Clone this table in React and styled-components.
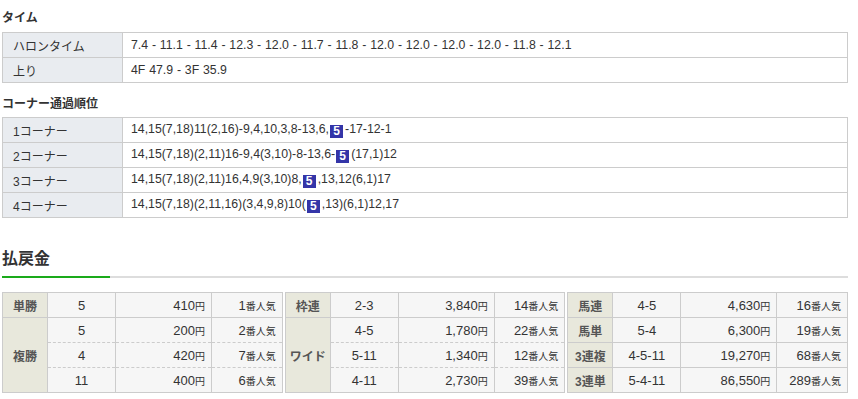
import React from 'react';
import styled, { createGlobalStyle } from 'styled-components';

const GlobalStyle = createGlobalStyle`
  body {
    margin: 0;
    background: #fff;
    color: #333;
    font-family: "Liberation Sans", "Noto Sans CJK JP", sans-serif;
    font-size: 12px;
  }
`;

const Page = styled.div`
  width: 846px;
  padding: 10px 2px 0;
`;

const SubTitle = styled.h3`
  margin: ${props => props.top || 0}px 0 ${props => props.bottom || 6}px;
  font-size: 12px;
  line-height: 16px;
  font-weight: bold;
  color: #333;
`;

const InfoTable = styled.table`
  width: 100%;
  border-collapse: collapse;
  table-layout: fixed;
  border: 1px solid #ccc;
`;

const InfoLabel = styled.th`
  width: 109px;
  height: 24px;
  padding: 0 0 0 10px;
  background: #e9ecf0;
  border: 1px solid #ccc;
  text-align: left;
  font-weight: normal;
  color: #333;
`;

const InfoValue = styled.td`
  height: 24px;
  padding: 0 0 0 8px;
  background: #fff;
  border: 1px solid #ccc;
  white-space: nowrap;
  font-size: 12.3px;
  word-spacing: ${props => props.spaced ? 0.4 : 0}px;
`;

const Horse = styled.span`
  display: inline-block;
  width: 13px;
  height: 13px;
  line-height: 13px;
  margin: 0 2px 0 1px;
  background: #3435a8;
  color: #fff;
  font-weight: bold;
  font-size: 12px;
  text-align: center;
  vertical-align: -2px;
`;

const PayTitle = styled.h2`
  margin: 31px 0 0;
  font-size: 16px;
  line-height: 20px;
  font-weight: bold;
  color: #333;
`;

const Rule = styled.div`
  display: flex;
  height: 2px;
  margin-top: 7px;
  background: #ddd;
`;

const RuleAccent = styled.div`
  width: 108px;
  background: #1aaa1a;
`;

const PayRow = styled.div`
  display: flex;
  gap: 2px;
  margin-top: 14px;
`;

const PayTable = styled.table`
  flex: 1;
  min-width: 0;
  border-collapse: collapse;
  table-layout: fixed;
  border: 1px solid #ccc;
`;

const PayKind = styled.th`
  width: 44px;
  height: 24px;
  padding: 0;
  background: #e8e8dc;
  border: 1px solid #ccc;
  color: #555;
  font-weight: bold;
  font-size: 12px;
  text-align: center;
  white-space: nowrap;
`;

const PayCell = styled.td`
  height: 24px;
  padding: 0 ${props => (props.align === 'right' ? 6 : 0)}px 0 0;
  background: #f6f6f6;
  border: 1px solid #ccc;
  ${props => props.dashTop && 'border-top: 1px dashed #ccc;'}
  ${props => props.dashBottom && 'border-bottom: 1px dashed #ccc;'}
  text-align: ${props => props.align || 'center'};
  color: #333;
  white-space: nowrap;
  font-size: 13px;
`;

const Unit = styled.span`
  font-size: 10px;
`;

const times = [
  ['ハロンタイム', '7.4 - 11.1 - 11.4 - 12.3 - 12.0 - 11.7 - 11.8 - 12.0 - 12.0 - 12.0 - 12.0 - 11.8 - 12.1'],
  ['上り', '4F 47.9 - 3F 35.9'],
];

const corners = [
  ['1コーナー', '14,15(7,18)11(2,16)-9,4,10,3,8-13,6,', '-17-12-1'],
  ['2コーナー', '14,15(7,18)(2,11)16-9,4(3,10)-8-13,6-', '(17,1)12'],
  ['3コーナー', '14,15(7,18)(2,11)16,4,9(3,10)8,', ',13,12(6,1)17'],
  ['4コーナー', '14,15(7,18)(2,11,16)(3,4,9,8)10(', ',13)(6,1)12,17'],
];

const payouts = [
  [
    { kind: '単勝', rows: [['5', '410', '1']] },
    { kind: '複勝', rows: [['5', '200', '2'], ['4', '420', '7'], ['11', '400', '6']] },
  ],
  [
    { kind: '枠連', rows: [['2-3', '3,840', '14']] },
    { kind: 'ワイド', rows: [['4-5', '1,780', '22'], ['5-11', '1,340', '12'], ['4-11', '2,730', '39']] },
  ],
  [
    { kind: '馬連', rows: [['4-5', '4,630', '16']] },
    { kind: '馬単', rows: [['5-4', '6,300', '19']] },
    { kind: '3連複', rows: [['4-5-11', '19,270', '68']] },
    { kind: '3連単', rows: [['5-4-11', '86,550', '289']] },
  ],
];

function PayBlock({ groups }) {
  return (
    <PayTable>
      <colgroup>
        <col style={{ width: 45 }} />
        <col style={{ width: 68 }} />
        <col style={{ width: 96 }} />
        <col />
      </colgroup>
      <tbody>
        {groups.map(g =>
          g.rows.map((r, i) => {
            const dashTop = i > 0;
            const dashBottom = i < g.rows.length - 1;
            return (
              <tr key={g.kind + i}>
                {i === 0 && <PayKind rowSpan={g.rows.length}>{g.kind}</PayKind>}
                <PayCell dashTop={dashTop} dashBottom={dashBottom}>{r[0]}</PayCell>
                <PayCell align="right" dashTop={dashTop} dashBottom={dashBottom}>
                  {r[1]}<Unit>円</Unit>
                </PayCell>
                <PayCell align="right" dashTop={dashTop} dashBottom={dashBottom}>
                  {r[2]}<Unit>番人気</Unit>
                </PayCell>
              </tr>
            );
          })
        )}
      </tbody>
    </PayTable>
  );
}

export default function App() {
  return (
    <Page>
      <GlobalStyle />
      <SubTitle>タイム</SubTitle>
      <InfoTable>
        <tbody>
          {times.map(([label, value]) => (
            <tr key={label}>
              <InfoLabel>{label}</InfoLabel>
              <InfoValue spaced>{value}</InfoValue>
            </tr>
          ))}
        </tbody>
      </InfoTable>

      <SubTitle top={13} bottom={5}>コーナー通過順位</SubTitle>
      <InfoTable>
        <tbody>
          {corners.map(([label, before, after]) => (
            <tr key={label}>
              <InfoLabel>{label}</InfoLabel>
              <InfoValue>
                {before}<Horse>5</Horse>{after}
              </InfoValue>
            </tr>
          ))}
        </tbody>
      </InfoTable>

      <PayTitle>払戻金</PayTitle>
      <Rule>
        <RuleAccent />
      </Rule>

      <PayRow>
        {payouts.map((groups, i) => (
          <PayBlock key={i} groups={groups} />
        ))}
      </PayRow>
    </Page>
  );
}
